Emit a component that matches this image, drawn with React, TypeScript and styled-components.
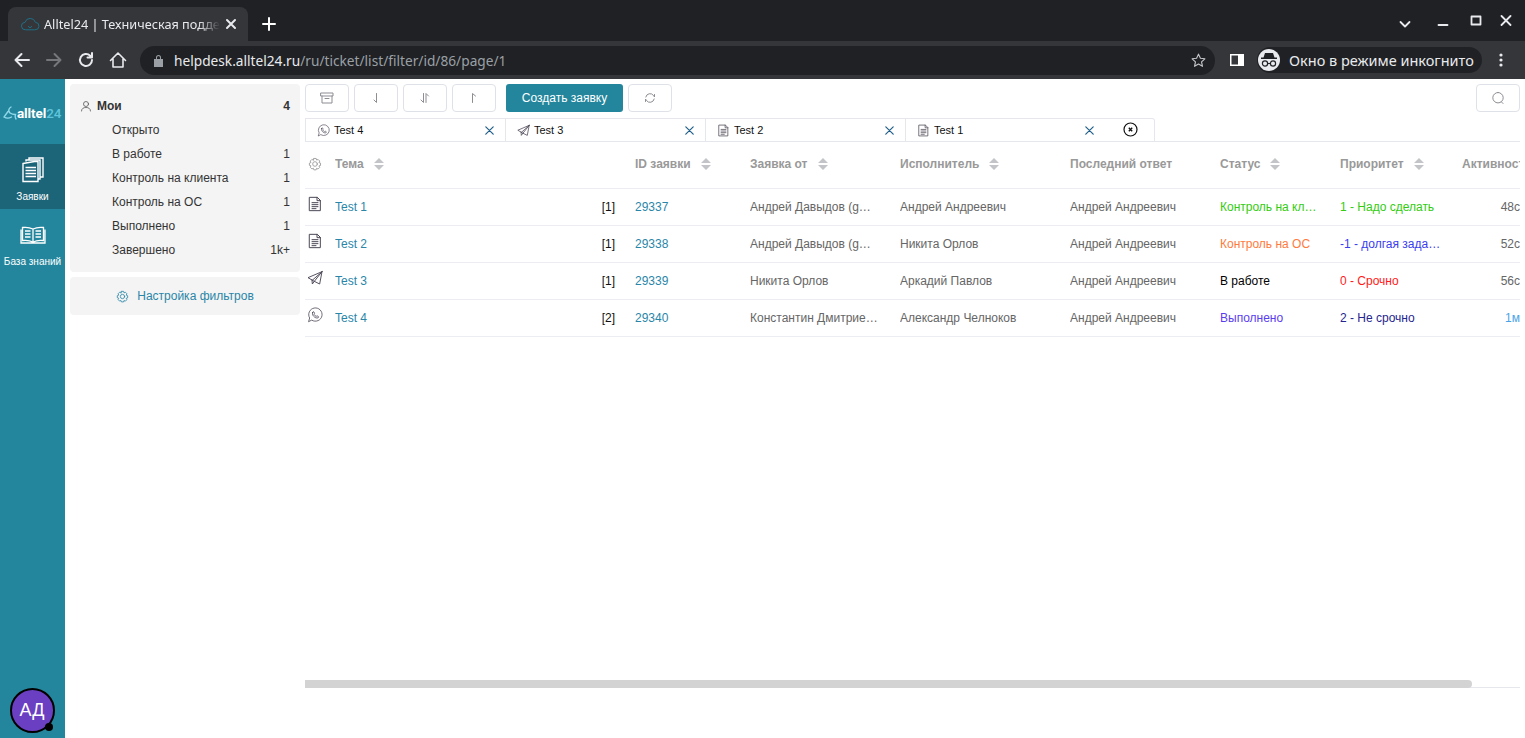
import React from "react";
import styled, { createGlobalStyle } from "styled-components";

const Global = createGlobalStyle`
  html, body { margin: 0; padding: 0; height: 100%; background: #fff; overflow: hidden; }
  #root { height: 738px; }
  * { box-sizing: border-box; }
  body { font-family: "Liberation Sans", Arial, sans-serif; font-size: 12px; }
`;

const Page = styled.div`display:flex;flex-direction:column;width:1525px;height:738px;overflow:hidden;`;

/* Browser chrome */
const TabStrip = styled.div`display:flex;align-items:flex-end;height:41px;background:#202124;padding-left:8px;`;
const BrowserTab = styled.div`display:flex;align-items:center;width:240px;height:34px;background:#35363a;border-radius:8px 8px 0 0;padding:0 8px 0 12px;color:#e8eaed;font-family:"Noto Sans",sans-serif;font-size:12.700px;`;
const TabTitle = styled.span`width:176px;margin-left:4px;margin-right:4px;white-space:nowrap;overflow:hidden;-webkit-mask-image:linear-gradient(90deg,#000 88%,transparent);mask-image:linear-gradient(90deg,#000 88%,transparent);`;
const NewTab = styled.div`display:flex;align-items:center;justify-content:center;width:28px;height:34px;margin-left:7px;`;
const WindowControls = styled.div`display:flex;align-items:center;margin-left:auto;height:41px;padding:0 7px 0 0;`;
const WinButton = styled.div<{ $w: number }>`display:flex;align-items:center;justify-content:center;width:${p => p.$w}px;height:41px;`;

const BrowserBar = styled.div`display:flex;align-items:center;height:38px;background:#35363a;padding:0 8px 0 6px;`;
const NavButton = styled.div`display:flex;align-items:center;justify-content:center;width:32px;height:32px;flex:none;`;
const Omnibox = styled.div`display:flex;align-items:center;flex:1;height:29px;margin:0 6px;background:#202124;border-radius:15px;padding:0 8px 0 13px;font-family:"Noto Sans",sans-serif;font-size:13.700px;color:#9aa0a6;`;
const Host = styled.span`color:#e8eaed;margin-left:10px;`;
const UrlPath = styled.span`flex:1;`;
const IncognitoPill = styled.div`display:flex;align-items:center;width:225px;height:26px;margin:0 3px 0 4px;background:#202124;border-radius:13px;padding-left:1px;color:#e8eaed;font-family:"Noto Sans",sans-serif;font-size:14.500px;white-space:nowrap;flex:none;`;
const IncognitoIcon = styled.div`display:flex;align-items:center;justify-content:center;width:22px;height:22px;background:#e8eaed;border-radius:50%;margin-right:9px;`;

/* App */
const App_ = styled.div`display:flex;flex:1;min-height:0;`;
const Rail = styled.nav`display:flex;flex-direction:column;width:65px;background:#23869c;flex:none;padding-bottom:5px;`;
const LogoBox = styled.div`display:flex;align-items:center;height:65px;padding:3px 0 0 3px;`;
const LogoText = styled.span`font-family:"Roboto",sans-serif;font-weight:700;font-size:13.500px;color:#fff;letter-spacing:-.1px;`;
const LogoNum = styled.span`color:#5fc4dd;font-weight:500;`;
const RailItem = styled.div<{ $active?: boolean }>`display:flex;flex-direction:column;align-items:center;height:65px;padding-top:13px;background:${p => (p.$active ? "#1c6578" : "transparent")};color:#fff;font-size:10px;`;
const RailIcon = styled.div`display:flex;align-items:center;justify-content:center;height:26px;`;
const RailLabel = styled.span`margin-top:8px;line-height:12px;white-space:nowrap;`;
const Avatar = styled.div`position:relative;display:flex;align-items:center;justify-content:center;width:45px;height:45px;margin:auto 0 0 10px;padding-right:1px;border:2px solid #000;border-radius:50%;background:#6a3fc2;color:#fff;font-size:18px;`;
const AvatarDot = styled.span`position:absolute;right:0;bottom:0;width:8px;height:8px;background:#000;border-radius:50%;`;

const FilterColumn = styled.aside`display:flex;flex-direction:column;width:230px;margin:5px 5px 0;gap:5px;flex:none;`;
const FilterCard = styled.div`background:#f4f4f4;border-radius:4px;padding:10px;height:188px;`;
const FilterRow = styled.div<{ $head?: boolean }>`display:flex;align-items:center;gap:5px;height:24px;padding-left:${p => (p.$head ? 0 : 32)}px;color:#333;font-weight:${p => (p.$head ? 700 : 400)};`;
const FilterName = styled.span`flex:1;`;
const SettingsCard = styled.div`display:flex;align-items:center;justify-content:center;gap:8px;height:38px;background:#f4f4f4;border-radius:4px;color:#2a86a8;`;

const Main = styled.main`display:flex;flex-direction:column;flex:1;min-width:0;margin:5px 5px 0 0;overflow:hidden;`;
const Toolbar = styled.div`display:flex;align-items:center;gap:5px;height:28px;flex:none;`;
const ToolButton = styled.button<{ $push?: boolean }>`display:flex;align-items:center;justify-content:center;width:44px;height:28px;padding:0;background:#fff;border:1px solid #dfe1e8;border-radius:4px;margin-left:${p => (p.$push ? "auto" : "0")};`;
const CreateButton = styled.button`width:117px;height:28px;margin-left:5px;padding:0;background:#23869c;border:0;border-radius:3px;color:#fff;font:12px "Liberation Sans",sans-serif;`;

const Tabs = styled.div`display:flex;height:24px;margin-top:6px;flex:none;border-bottom:1px solid #e6e7ec;`;
const Tab = styled.div<{ $w?: number; $last?: boolean }>`display:flex;align-items:center;justify-content:${p => (p.$last ? "center" : "flex-start")};width:${p => p.$w ?? 200}px;height:24px;border:1px solid #e6e7ec;border-left-width:${p => (p.$last ? 0 : 1)}px;border-right-width:${p => (p.$last ? 1 : 0)}px;border-radius:${p => (p.$last ? "0 3px 0 0" : "0")};padding:0 ${p => (p.$last ? 0 : 11)}px ${p => (p.$last ? 2 : 0)}px ${p => (p.$last ? 1 : 11)}px;color:#111;font-size:11px;`;
const TabLabel = styled.span`flex:1;margin-left:4px;`;

const Row = styled.div<{ $head?: boolean }>`display:grid;grid-template-columns:30px 300px 115px 150px 170px 150px 120px 120px 60px;align-items:center;flex:none;height:${p => (p.$head ? 47 : 37)}px;padding-bottom:${p => (p.$head ? 2 : 0)}px;border-bottom:1px solid #ecedf2;`;
const HeadCell = styled.div`display:flex;align-items:center;gap:10px;color:#999;font-weight:700;white-space:nowrap;overflow:hidden;`;
const GearCell = styled(HeadCell)`padding-left:3px;`;
const ActivityHead = styled(HeadCell)`padding-left:2px;`;
const IconCell = styled.div`display:flex;align-items:flex-start;height:100%;padding:7px 0 0 2px;`;
const TopicCell = styled.div`display:flex;justify-content:space-between;padding-right:20px;color:#2a86a8;`;
const Count = styled.span`color:#111;`;
const Cell = styled.div<{ $color?: string }>`color:${p => p.$color ?? "#666"};white-space:nowrap;overflow:hidden;text-overflow:ellipsis;padding-right:15px;`;
const TimeCell = styled.div<{ $color?: string }>`color:${p => p.$color ?? "#666"};text-align:right;`;

const Track = styled.div`margin-top:auto;margin-bottom:50px;height:8px;flex:none;border-bottom:1px solid #e6e7ec;`;
const Thumb = styled.div`width:1167px;height:8px;background:#d3d3d3;border-radius:0 4px 4px 0;`;

const Stroke = (p: { s?: number; c?: string; sw?: number; vb?: string; children: React.ReactNode }) => (
  <svg width={p.s ?? 16} height={p.s ?? 16} viewBox={p.vb ?? "0 0 24 24"} fill="none" stroke={p.c ?? "currentColor"} strokeWidth={p.sw ?? 1.5} strokeLinecap="round" strokeLinejoin="round" style={{ flex: "none" }}>
    {p.children}
  </svg>
);

const DocIcon = ({ s = 16, c = "#4b4655" }: { s?: number; c?: string }) => (
  <Stroke s={s} c={c} sw={1.5}>
    <path d="M4 2h11.500L20 6.500V22H4zM15 2v5h5M7.500 10h9M7.500 13h9M7.500 16h9M7.500 19h6" />
  </Stroke>
);
const PlaneIcon = ({ s = 16, c = "#4b4655" }: { s?: number; c?: string }) => (
  <Stroke s={s} c={c} sw={1.4}>
    <path d="M22.500 2.500 1.500 11.500l6 3.500zM22.500 2.500 19 21l-8-4-3.500-2M22.500 2.500 11 17M7.500 15 8 21l3-4" />
  </Stroke>
);
const WhatsIcon = ({ s = 16, c = "#4b4655" }: { s?: number; c?: string }) => (
  <Stroke s={s} c={c} sw={1.2}>
    <path d="M2.500 21.500 4 16.500A10 10 0 1 1 7.500 20z" />
    <path d="M8.500 8c.5-1.200 1.500-1.200 2-.4l.8 1.700c.2.500-.7 1.300-.8 1.700.6 1.300 1.800 2.500 3.200 3.100.5-.1 1.100-1 1.600-.8l1.700.9c.7.400.6 1.500-.4 2-2.200 1-5-.5-6.700-2.400C8.200 11.900 7.700 9.800 8.500 8z" />
  </Stroke>
);
const CloseX = () => (
  <Stroke s={9} c="#1f5f8a" sw={1.200} vb="0 0 9 9"><path d="M.8.8l7.400 7.400M8.200.8.8 8.200" /></Stroke>
);
const GearIcon = ({ c = "#999", s = 14 }: { c?: string; s?: number }) => (
  <Stroke s={s} c={c} sw={1.5}>
    <circle cx="12" cy="12" r="4" />
    <path d="M10 2.500h4l.8 2.800 2.600-1.100 2.800 2.800-1.400 2.500 2.700 1v4l-2.700.8 1.200 2.600-2.800 2.800-2.500-1.300-.7 2.600h-4l-.8-2.700-2.500 1.200-2.800-2.800 1.200-2.500-2.700-.9v-3.800l2.700-1-1.300-2.500 2.800-2.800 2.500 1.200z" />
  </Stroke>
);
const SortIcon = () => (
  <svg width="10" height="14" viewBox="0 0 10 14" fill="#c2c4c8" style={{ flex: "none" }}>
    <path d="M5 1l5 5H0zM5 13L0 8h10z" />
  </svg>
);
const BtnIcon = ({ d }: { d: string }) => (
  <Stroke s={14} c="#8d8d94" sw={1} vb="0 0 14 14"><path d={d} /></Stroke>
);

const HeaderCell = ({ label, sort = true }: { label: string; sort?: boolean }) => (
  <HeadCell>{label}{sort && <SortIcon />}</HeadCell>
);

const filters: [string, string][] = [
  ["Открыто", ""], ["В работе", "1"], ["Контроль на клиента", "1"], ["Контроль на ОС", "1"], ["Выполнено", "1"], ["Завершено", "1k+"],
];
const rows = [
  { icon: <DocIcon />, t: "Test 1", n: "[1]", id: "29337", from: "Андрей Давыдов (g…", who: "Андрей Андреевич", st: "Контроль на кл…", stc: "#33cc11", pr: "1 - Надо сделать", prc: "#33cc11", tm: "48с" },
  { icon: <DocIcon />, t: "Test 2", n: "[1]", id: "29338", from: "Андрей Давыдов (g…", who: "Никита Орлов", st: "Контроль на ОС", stc: "#ff7a3d", pr: "-1 - долгая зада…", prc: "#3a3df0", tm: "52с" },
  { icon: <PlaneIcon />, t: "Test 3", n: "[1]", id: "29339", from: "Никита Орлов", who: "Аркадий Павлов", st: "В работе", stc: "#000", pr: "0 - Срочно", prc: "#ff1a1a", tm: "56с" },
  { icon: <WhatsIcon />, t: "Test 4", n: "[2]", id: "29340", from: "Константин Дмитрие…", who: "Александр Челноков", st: "Выполнено", stc: "#5b3df0", pr: "2 - Не срочно", prc: "#25258f", tm: "1м", tmc: "#4aa3e8" },
];

export default function App() {
  return (
    <Page>
      <Global />
      <TabStrip>
        <BrowserTab>
          <Stroke s={20} c="#1f6f85" sw={1.2}><path d="M6.500 19A4.500 4.500 0 0 1 6 10a6.500 6.500 0 0 1 12.500 0 4.500 4.500 0 0 1-.5 9zM10 15l2 1.500L14 15" /></Stroke>
          <TabTitle>Alltel24 | Техническая поддержка</TabTitle>
          <Stroke s={14} c="#e8eaed" sw={2} vb="0 0 14 14"><path d="M3 3l8 8M11 3l-8 8" /></Stroke>
        </BrowserTab>
        <NewTab><Stroke s={16} c="#fff" sw={2} vb="0 0 16 16"><path d="M8 2v12M2 8h12" /></Stroke></NewTab>
        <WindowControls>
          <WinButton $w={46}><Stroke s={14} c="#e8eaed" sw={1.800} vb="0 0 14 14"><path d="M2.500 8L7 12.500 11.500 8" /></Stroke></WinButton>
          <WinButton $w={30}><Stroke s={12} c="#e8eaed" sw={1.800} vb="0 0 12 12"><path d="M1.500 10h9" /></Stroke></WinButton>
          <WinButton $w={36}><Stroke s={12} c="#e8eaed" sw={1.800} vb="0 0 12 12"><path d="M1.500 1.500h9v8h-9z" /></Stroke></WinButton>
          <WinButton $w={24}><Stroke s={12} c="#e8eaed" sw={1.800} vb="0 0 12 12"><path d="M1.500 1l9 9M10.500 1l-9 9" /></Stroke></WinButton>
        </WindowControls>
      </TabStrip>
      <BrowserBar>
        <NavButton><Stroke s={18} c="#e8eaed" sw={2} vb="0 0 18 18"><path d="M16 9H2.500M8.500 3l-6 6 6 6" /></Stroke></NavButton>
        <NavButton><Stroke s={18} c="#75777b" sw={2} vb="0 0 18 18"><path d="M2 9h13.500M9.500 3l6 6-6 6" /></Stroke></NavButton>
        <NavButton><Stroke s={18} c="#e8eaed" sw={2} vb="0 0 18 18"><path d="M15 9a6 6 0 1 1-1.800-4.300L15 6.500M15 2v4.500h-4.500" /></Stroke></NavButton>
        <NavButton><Stroke s={18} c="#e8eaed" sw={1.600} vb="0 0 18 18"><path d="M1.500 9.500 9 2l7.500 7.500M4 8v8h10V8" /></Stroke></NavButton>
        <Omnibox>
          <svg width="11" height="13" viewBox="0 0 11 13" fill="#9aa0a6" style={{ flex: "none" }}><path d="M1 5h9v8H1zM3 5V3.500a2.500 2.500 0 0 1 5 0V5H7V3.500a1.500 1.500 0 0 0-3 0V5z" /></svg>
          <Host>helpdesk.alltel24.ru</Host>
          <UrlPath>/ru/ticket/list/filter/id/86/page/1</UrlPath>
          <Stroke s={17} c="#c4c7c9" sw={1.6}><path d="M12 3l2.700 5.900 6.300.7-4.700 4.300 1.300 6.300L12 17l-5.600 3.200 1.300-6.300L3 9.600l6.300-.7z" /></Stroke>
        </Omnibox>
        <NavButton><svg width="14" height="14" viewBox="0 0 14 14" style={{ flex: "none" }}><path fill="#fff" d="M0 1h14v12H0z" /><path fill="#35363a" d="M1.500 2.500H8v9H1.500z" /></svg></NavButton>
        <IncognitoPill>
          <IncognitoIcon>
            <svg width="18" height="16" viewBox="0 0 18 16" fill="none" stroke="#202124" style={{ flex: "none" }}>
              <path fill="#202124" stroke="none" d="M5 1h8l1.500 4.500H17V7H1V5.500h2.500z" />
              <circle cx="5" cy="11.500" r="2.600" strokeWidth="1.200" />
              <circle cx="13" cy="11.500" r="2.600" strokeWidth="1.200" />
              <path d="M7.600 11.500h2.800" strokeWidth="1.200" />
            </svg>
          </IncognitoIcon>
          Окно в режиме инкогнито
        </IncognitoPill>
        <NavButton><svg width="4" height="14" viewBox="0 0 4 14" fill="#e8eaed" style={{ flex: "none" }}><circle cx="2" cy="2" r="1.600" /><circle cx="2" cy="7" r="1.600" /><circle cx="2" cy="12" r="1.600" /></svg></NavButton>
      </BrowserBar>
      <App_>
        <Rail>
          <LogoBox>
            <svg width="14" height="14" viewBox="0 0 14 14" fill="none" stroke="#8fd8ea" strokeWidth="1.400" strokeLinecap="round" style={{ flex: "none" }}>
              <path d="M8 1C5.500 2.500 5 5 7 7M5 5.500 1 11c2.500 1.500 5 1.500 7.500 0M7 7c1.500 1 3.500 1.500 5.500 1.500-.5 1.500-.5 3 .5 4.500" />
            </svg>
            <LogoText>alltel<LogoNum>24</LogoNum></LogoText>
          </LogoBox>
          <RailItem $active>
            <RailIcon>
              <svg width="22" height="26" viewBox="0 0 22 26" fill="none" stroke="#fff" strokeWidth="1.400" style={{ flex: "none" }}>
                <path d="M1 6.500 12.500 4.500h3.500v20H1zM3.500 10.500H14M3.500 13.500H14M3.500 16.500H14M3.500 19.500H14" />
                <path d="M4 4.500V3h14v19h-2M7 3V1h14v19h-3" />
              </svg>
            </RailIcon>
            <RailLabel>Заявки</RailLabel>
          </RailItem>
          <RailItem>
            <RailIcon>
              <svg width="26" height="18" viewBox="0 0 26 18" fill="none" stroke="#fff" strokeWidth="1.300" style={{ flex: "none" }}>
                <path d="M13 3C10 1.500 6 1 2.500 1.500v13C6 14 10 14.500 13 16c3-1.500 7-2 10.500-1.500v-13C20 1 16 1.500 13 3zM13 3v13M1 3.500V17h24V3.500" />
                <path d="M5 5h5.500M5 8h5.500M5 11h5.500M15.500 5H21M15.500 8H21M15.500 11H21" />
              </svg>
            </RailIcon>
            <RailLabel>База знаний</RailLabel>
          </RailItem>
          <Avatar>АД<AvatarDot /></Avatar>
        </Rail>
        <FilterColumn>
          <FilterCard>
            <FilterRow $head>
              <Stroke s={12} c="#555" sw={1.600}><circle cx="12" cy="8" r="5" /><path d="M3 22c0-5 4-7 9-7s9 2 9 7" /></Stroke>
              <FilterName>Мои</FilterName>4
            </FilterRow>
            {filters.map(([n, c]) => (
              <FilterRow key={n}><FilterName>{n}</FilterName>{c}</FilterRow>
            ))}
          </FilterCard>
          <SettingsCard><GearIcon c="#2a86a8" s={13} />Настройка фильтров</SettingsCard>
        </FilterColumn>
        <Main>
          <Toolbar>
            <ToolButton><BtnIcon d="M1 2h12v3H1zM2 5v7h10V5M5 7.500h4" /></ToolButton>
            <ToolButton><BtnIcon d="M7.500 2.500v9L5 9" /></ToolButton>
            <ToolButton><BtnIcon d="M5.500 2.500v9L3 9M8 11.500v-9L10.500 5" /></ToolButton>
            <ToolButton><BtnIcon d="M5.500 11.500v-9L8.500 5" /></ToolButton>
            <CreateButton>Создать заявку</CreateButton>
            <ToolButton><BtnIcon d="M2.800 6A4.300 4.300 0 0 1 10.500 4.500L11.500 6V3.500M11.200 8A4.300 4.300 0 0 1 3.500 9.500L2.500 8v2.500" /></ToolButton>
            <ToolButton $push><BtnIcon d="M7 1.500a5.200 5.200 0 1 0 0 10.400 5.200 5.200 0 0 0 0-10.400zM10.500 11l1.500 1.500" /></ToolButton>
          </Toolbar>
          <Tabs>
            <Tab><WhatsIcon s={13} /><TabLabel>Test 4</TabLabel><CloseX /></Tab>
            <Tab><PlaneIcon s={13} /><TabLabel>Test 3</TabLabel><CloseX /></Tab>
            <Tab><DocIcon s={13} c="#5a5560" /><TabLabel>Test 2</TabLabel><CloseX /></Tab>
            <Tab><DocIcon s={13} c="#5a5560" /><TabLabel>Test 1</TabLabel><CloseX /></Tab>
            <Tab $w={50} $last>
              <svg width="15" height="15" viewBox="0 0 15 15" fill="none" stroke="#111" strokeWidth="1.200" style={{ flex: "none" }}>
                <circle cx="7.500" cy="7.500" r="6.500" /><path d="M5.800 5.800l3.400 3.400M9.200 5.800l-3.400 3.400" strokeWidth="1.400" />
              </svg>
            </Tab>
          </Tabs>
          <Row $head>
            <GearCell><GearIcon /></GearCell>
            <HeaderCell label="Тема" />
            <HeaderCell label="ID заявки" />
            <HeaderCell label="Заявка от" />
            <HeaderCell label="Исполнитель" />
            <HeaderCell label="Последний ответ" sort={false} />
            <HeaderCell label="Статус" />
            <HeaderCell label="Приоритет" />
            <ActivityHead>Активность</ActivityHead>
          </Row>
          {rows.map(r => (
            <Row key={r.id}>
              <IconCell>{r.icon}</IconCell>
              <TopicCell>{r.t}<Count>{r.n}</Count></TopicCell>
              <Cell $color="#2a86a8">{r.id}</Cell>
              <Cell>{r.from}</Cell>
              <Cell>{r.who}</Cell>
              <Cell>Андрей Андреевич</Cell>
              <Cell $color={r.stc}>{r.st}</Cell>
              <Cell $color={r.prc}>{r.pr}</Cell>
              <TimeCell $color={r.tmc}>{r.tm}</TimeCell>
            </Row>
          ))}
          <Track><Thumb /></Track>
        </Main>
      </App_>
    </Page>
  );
}
